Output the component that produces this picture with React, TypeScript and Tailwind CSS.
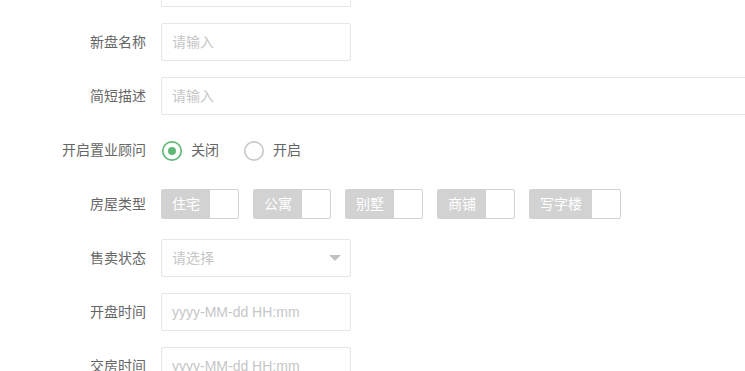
import React from "react";

const font = { fontFamily: '"Liberation Sans", "Noto Sans CJK SC", sans-serif' };

function Row({ label, children }: { label?: string; children: React.ReactNode }) {
  return (
    <div className="flex h-[38px] shrink-0 items-center">
      <div className="w-[161px] shrink-0 pr-[15px] text-right text-[14px] leading-[20px] text-[#666]">
        {label}
      </div>
      {children}
    </div>
  );
}

function Input({ placeholder, wide }: { placeholder?: string; wide?: boolean }) {
  return (
    <div
      className={`flex h-[38px] items-center rounded-[2px] border border-[#e6e6e6] bg-white pl-[10px] text-[14px] text-[#c6c6c6] ${
        wide ? "w-[620px] shrink-0" : "w-[190px]"
      }`}
    >
      {placeholder}
    </div>
  );
}

function Radio({ checked, label }: { checked?: boolean; label: string }) {
  return (
    <div className="flex items-center">
      <svg width="22" height="22" viewBox="0 0 22 22">
        <circle
          cx="11"
          cy="11"
          r="9.2"
          fill="none"
          stroke={checked ? "#5FB878" : "#c9c9c9"}
          strokeWidth="1.7"
        />
        {checked && <circle cx="11" cy="11" r="4" fill="#5FB878" />}
      </svg>
      <span className="ml-[8px] text-[14px] text-[#666]">{label}</span>
    </div>
  );
}

function Tag({ label }: { label: string }) {
  return (
    <div className="flex h-[30px] overflow-hidden rounded-[2px] border border-[#d2d2d2] bg-white">
      <div className="flex items-center bg-[#d2d2d2] px-[10px] text-[14px] text-white">{label}</div>
      <div className="w-[28px]" />
    </div>
  );
}

export default function App() {
  return (
    <div className="h-[371px] w-[745px] overflow-hidden bg-white" style={font}>
      <div className="mt-[-31px] flex flex-col gap-[16px]">
        <Row>
          <Input />
        </Row>
        <Row label="新盘名称">
          <Input placeholder="请输入" />
        </Row>
        <Row label="简短描述">
          <Input placeholder="请输入" wide />
        </Row>
        <Row label="开启置业顾问">
          <div className="flex items-center gap-[24px] pt-[1px]">
            <Radio checked label="关闭" />
            <Radio label="开启" />
          </div>
        </Row>
        <Row label="房屋类型">
          <div className="flex items-center gap-[14px]">
            <Tag label="住宅" />
            <Tag label="公寓" />
            <Tag label="别墅" />
            <Tag label="商铺" />
            <Tag label="写字楼" />
          </div>
        </Row>
        <Row label="售卖状态">
          <div className="relative w-[190px]">
            <Input placeholder="请选择" />
            <div className="absolute right-[10px] top-1/2 mt-[-3px] h-0 w-0 border-x-[6px] border-t-[6px] border-x-transparent border-t-[#c2c2c2]" />
          </div>
        </Row>
        <Row label="开盘时间">
          <Input placeholder="yyyy-MM-dd HH:mm" />
        </Row>
        <Row label="交房时间">
          <Input placeholder="yyyy-MM-dd HH:mm" />
        </Row>
      </div>
    </div>
  );
}
